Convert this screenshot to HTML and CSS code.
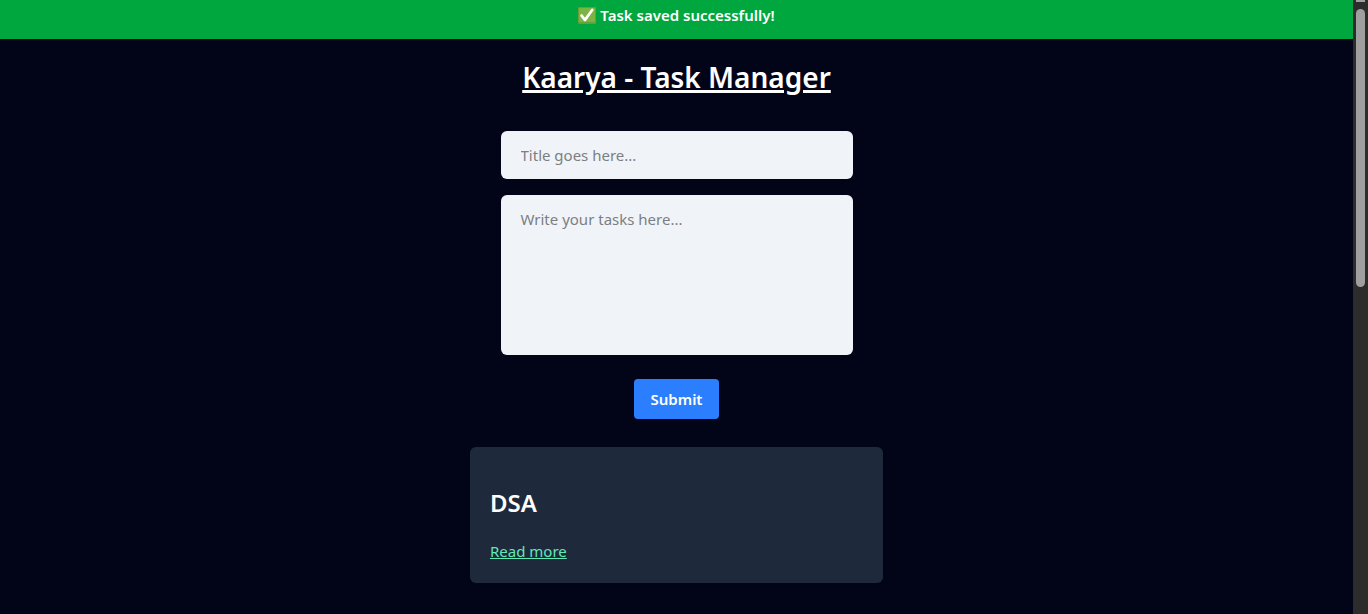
FILE: index.html
```html
<!DOCTYPE html>
<html lang="en">
<head>
<meta charset="utf-8">
<meta name="viewport" content="width=device-width, initial-scale=1">
<title>Kaarya - Task Manager</title>
<link rel="stylesheet" href="styles.css">
</head>
<body>
<div class="page">
  <div class="banner" role="status">
    <svg class="check" viewBox="0 0 18 17" aria-hidden="true">
      <rect width="18" height="17" rx="1" fill="#689f38"/>
      <rect x="1" y="1" width="16" height="14" rx="1" fill="#7cb342"/>
      <path d="M3.6 8.6 L7 13 L14.2 3" fill="none" stroke="#fff" stroke-width="2.8" stroke-linecap="round" stroke-linejoin="round"/>
    </svg>
    <span>Task saved successfully!</span>
  </div>
  <main class="content">
    <h1 class="title">Kaarya - Task Manager</h1>
    <form class="task-form">
      <input class="field" type="text" placeholder="Title goes here..." aria-label="Title">
      <textarea class="field field-body" placeholder="Write your tasks here..." aria-label="Task"></textarea>
      <button class="submit" type="button">Submit</button>
    </form>
    <article class="card">
      <h2 class="card-title">DSA</h2>
      <a class="card-link" href="#">Read more</a>
    </article>
  </main>
</div>
<div class="scrollbar" aria-hidden="true">
  <div class="scroll-arrow"></div>
  <div class="scroll-thumb"></div>
</div>
</body>
</html>
```
FILE: styles.css
```css
* {
  box-sizing: border-box;
}

body {
  margin: 0;
  display: flex;
  min-height: 100vh;
  background: #020417;
  color: #fff;
  font-family: "Noto Sans", sans-serif;
  font-size: 15px;
  line-height: 24px;
}

.page {
  flex: 1;
  min-width: 0;
}

.banner {
  display: flex;
  justify-content: center;
  align-items: center;
  gap: 4px;
  padding: 3px 16px 12px;
  background: #00a63e;
  font-weight: 600;
}

.check {
  width: 18px;
  height: 17px;
}

.content {
  display: flex;
  flex-direction: column;
  align-items: center;
  padding: 20px 16px 28px;
}

.title {
  margin: 0 0 36px;
  font-size: 28px;
  line-height: 36px;
  font-weight: 600;
  text-decoration: underline;
  text-decoration-thickness: 3px;
}

.task-form {
  display: flex;
  flex-direction: column;
  align-items: center;
  gap: 16px;
  width: 100%;
  max-width: 352px;
  margin-bottom: 28px;
}

.field {
  display: block;
  width: 100%;
  padding: 12px 20px;
  border: 0;
  border-radius: 6px;
  background: #f0f4f9;
  color: #020417;
  font: inherit;
}

.field::placeholder {
  color: #7b7f82;
}

.field-body {
  height: 160px;
  resize: none;
}

.submit {
  margin-top: 8px;
  padding: 8px 17px;
  border: 0;
  border-radius: 4px;
  background: #2b7fff;
  color: #fff;
  font: inherit;
  font-weight: 600;
}

.card {
  width: 100%;
  max-width: 413px;
  padding: 40px 20px 20px;
  border-radius: 6px;
  background: #1e2a3c;
}

.card-title {
  margin: 0 0 20px;
  font-size: 24px;
  line-height: 32px;
  font-weight: 600;
}

.card-link {
  color: #5ee9b5;
}

.scrollbar {
  display: flex;
  flex-direction: column;
  gap: 7px;
  width: 15px;
  padding: 0 3px;
  background: #2c2c2c;
}

.scroll-arrow {
  height: 2px;
  background: #9f9f9f;
}

.scroll-thumb {
  height: 278px;
  border-radius: 5px;
  background: #9f9f9f;
}
```
